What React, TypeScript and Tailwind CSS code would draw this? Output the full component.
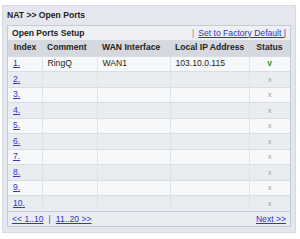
export default function App() {
  const rows = Array.from({ length: 10 }, (_, i) => i + 1);
  const link = "text-[#3333cc] underline";

  return (
    <div className="w-[300px] h-[239px] bg-white pt-[5px] pl-[2px] font-['Liberation_Sans',Arial,sans-serif]">
      <div className="w-[294px] bg-[#e4e8ee] border border-[#d5dae1] pb-[5px]">
        <div className="h-[19px] flex items-center px-[4px] text-[8.6px] font-bold text-[#222]">
          NAT &gt;&gt; Open Ports
        </div>
        <div className="mx-[4px] border border-[#c5cbd3] bg-[#f7f8fa]">
          <div className="h-[14px] flex items-center px-[4px] bg-[#eef0f3] text-[8.6px]">
            <span className="font-bold text-[#222]">Open Ports Setup</span>
            <span className="ml-auto text-[#888]">|</span>
            <span className={`ml-[4px] ${link}`}>Set to Factory Default |</span>
          </div>
          <table className="w-full border-collapse text-[8.6px] text-[#222]">
            <thead>
              <tr className="h-[16px] bg-[#d5d9df] font-bold">
                <th className="w-[34px] text-center font-bold">Index</th>
                <th className="w-[55px] text-left pl-[5px] font-bold">Comment</th>
                <th className="w-[73px] text-left pl-[5px] font-bold">WAN Interface</th>
                <th className="w-[79px] text-left pl-[5px] font-bold">Local IP Address</th>
                <th className="text-center font-bold">Status</th>
              </tr>
            </thead>
            <tbody>
              {rows.map((n) => (
                <tr
                  key={n}
                  className={`h-[15.5px] border-t border-[#d9dce1] ${
                    n % 2 === 0 ? "bg-[#e9ecf0]" : "bg-[#f7f8fa]"
                  }`}
                >
                  <td className="pl-[5px] border-r border-[#dfe2e6]">
                    <span className={link}>{n}.</span>
                  </td>
                  <td className="pl-[5px] border-r border-[#dfe2e6]">{n === 1 ? "RingQ" : ""}</td>
                  <td className="pl-[5px] border-r border-[#dfe2e6]">{n === 1 ? "WAN1" : ""}</td>
                  <td className="pl-[5px] border-r border-[#dfe2e6]">{n === 1 ? "103.10.0.115" : ""}</td>
                  <td className="text-center">
                    {n === 1 ? (
                      <span className="font-bold text-[#339933]">v</span>
                    ) : (
                      <span className="text-[7px] text-[#999]">x</span>
                    )}
                  </td>
                </tr>
              ))}
            </tbody>
          </table>
          <div className="h-[15px] flex items-center px-[4px] bg-[#e9ecf0] border-t border-[#c5cbd3] text-[8.6px]">
            <span className={link}>&lt;&lt; 1..10</span>
            <span className="mx-[5px] text-[#666]">|</span>
            <span className={link}>11..20 &gt;&gt;</span>
            <span className={`ml-auto ${link}`}>Next &gt;&gt;</span>
          </div>
        </div>
      </div>
    </div>
  );
}
